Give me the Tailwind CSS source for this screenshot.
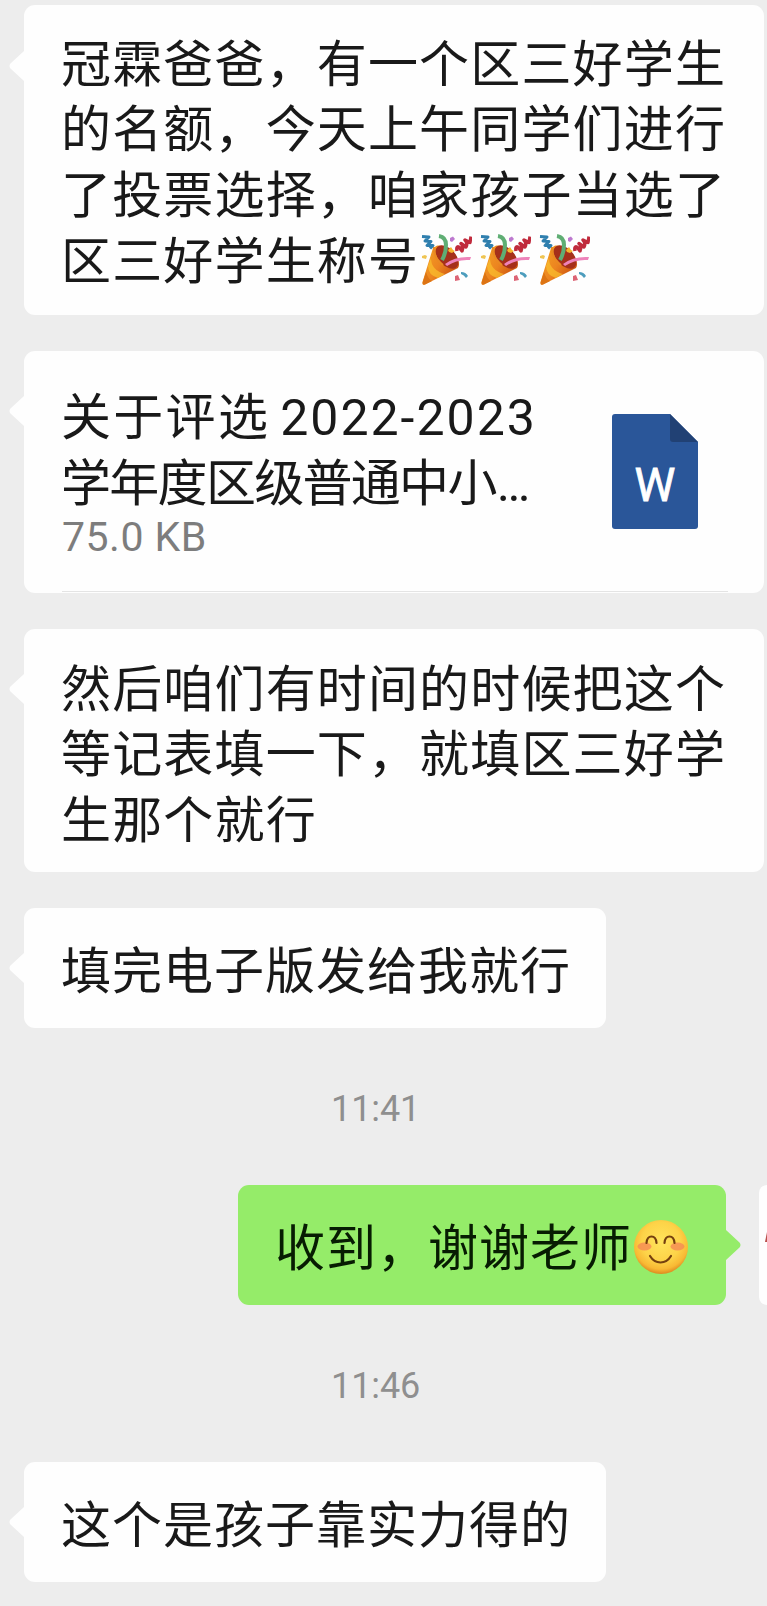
<!DOCTYPE html>
<html lang="zh-CN">
<head>
<meta charset="utf-8">
<title>聊天</title>
<script src="https://cdn.jsdelivr.net/npm/@tailwindcss/browser@4"></script>
</head>
<body class="bg-[#ededed]">
<svg width="0" height="0" class="absolute" aria-hidden="true">
  <defs>
    <linearGradient id="cone" x1="0" y1="0" x2="1" y2="0.6">
      <stop offset="0" stop-color="#f5a623"/><stop offset="0.55" stop-color="#ec8420"/><stop offset="1" stop-color="#c9500f"/>
    </linearGradient>
    <radialGradient id="face" cx="0.5" cy="0.4" r="0.6">
      <stop offset="0" stop-color="#ffe45c"/><stop offset="0.6" stop-color="#fdd348"/><stop offset="0.85" stop-color="#f8b934"/><stop offset="1" stop-color="#dd8a20"/>
    </radialGradient>
    <symbol id="popper" viewBox="0 0 51 52">
      <path d="M14 13C17 10 23 12 29 16C36 21 40 29 37 34L3 51Q1 51 1.500 48L12 14Z" fill="url(#cone)"/>
      <path d="M10 24Q10 36 24 40L17 44Q7 41 7 32Z" fill="#f9bd2e" opacity=".75"/>
      <path d="M5 38Q7 45 11 47L4 50.500Q1 51 1.800 48Z" fill="#dd7414"/>
      <ellipse cx="26" cy="23" rx="8.500" ry="14" transform="rotate(-43 26 23)" fill="#a5301a"/>
      <path d="M13 13Q12 23 22 31" fill="none" stroke="#e98a22" stroke-width="2"/>
      <path d="M18 2Q25 3 25 11Q25 19 21 26" fill="none" stroke="#5fae74" stroke-width="4"/>
      <path d="M24 30Q34 22 50 23L49 26Q36 25 26 32Z" fill="#ee83ba"/>
      <path d="M1 2.500L8 3L4 7L10 7.500L6 11.500L12 11.500L9 14.500" fill="none" stroke="#2f7fae" stroke-width="3" stroke-linejoin="round"/>
      <path d="M36 17Q35 12 38 13L41 17Q43 12 40 9.500L45 13Q47 9 44 6L49 8.500L50 2.500" fill="none" stroke="#c02a3c" stroke-width="3.400" stroke-linejoin="round"/>
      <path d="M29 4L32 2.500L34 5L31 8L29 7Z" fill="#bd79cf"/>
      <path d="M30 13L32 16L34 17L31 19L28 18L27 16Z" fill="#f5b52d"/>
      <path d="M1 22L4 21L6 22L5 25L1 24Z" fill="#efc553"/>
      <path d="M34 42L37 41L39 46L34 47Z" fill="#dc6475"/>
      <path d="M40 38Q45 38 47 42L45 44Q43 41 40 40Z" fill="#4d9dbd"/>
    </symbol>
    <symbol id="smile" viewBox="0 0 54 54">
      <circle cx="27" cy="27" r="27" fill="url(#face)"/>
      <ellipse cx="10.500" cy="26.500" rx="7" ry="4" fill="#f58a55" opacity=".8"/>
      <ellipse cx="43.500" cy="26.500" rx="7" ry="4" fill="#f58a55" opacity=".8"/>
      <path d="M12.500 23Q13 16.500 17.500 16.500T22.500 23M30.500 23Q31 16.500 35.500 16.500T40.500 23" fill="none" stroke="#75400f" stroke-width="2.200" stroke-linecap="round"/>
      <path d="M16 36Q20 42.500 26.500 42.500T37 36" fill="none" stroke="#75400f" stroke-width="2.200" stroke-linecap="round"/>
    </symbol>
    <symbol id="tail" viewBox="0 0 16 32">
      <path d="M16 0V32L15 31L1.500 18.500Q-0.500 16 1.500 13.500L15 1Z"/>
    </symbol>
  </defs>
</svg>

<main class="flex h-[1606px] w-[767px] flex-col items-start overflow-hidden pt-[5px] font-['Noto_Sans_CJK_SC',sans-serif] text-[50px] leading-[65.3px] tracking-[1.16px] whitespace-nowrap text-[#191919]">

  <section class="relative ml-6 h-[310px] w-[740px] rounded-[11px] bg-[#fefefe] pt-[23px] pl-[37px]">
    <svg class="absolute top-[45px] -left-[15px] h-8 w-4 fill-[#fefefe]"><use href="#tail"/></svg>
    <p>冠霖爸爸，有一个区三好学生</p>
    <p>的名额，今天上午同学们进行</p>
    <p>了投票选择，咱家孩子当选了</p>
    <div class="flex items-center gap-2 pt-px">
      <p class="mr-[-6px]">区三好学生称号</p>
      <svg class="mt-1 h-[52px] w-[51px]"><use href="#popper"/></svg>
      <svg class="mt-1 h-[52px] w-[51px]"><use href="#popper"/></svg>
      <svg class="mt-1 h-[52px] w-[51px]"><use href="#popper"/></svg>
    </div>
  </section>

  <section class="relative mt-9 ml-6 flex h-[242px] w-[740px] rounded-[11px] bg-[#fefefe] pl-[37px]">
    <svg class="absolute top-11 -left-[15px] h-8 w-4 fill-[#fefefe]"><use href="#tail"/></svg>
    <div class="w-[551px] shrink-0 pt-[30px]">
      <p class="flex h-[66px] items-baseline tracking-[2.3px]"><span>关于评选</span><span class="ml-[10px] font-[Roboto] tracking-[2px]">2022-2023</span></p>
      <p class="flex h-[65px] items-baseline tracking-[-1.7px]"><span>学年度区级普通中小</span><span class="ml-[1px] font-[Roboto] tracking-normal">…</span></p>
      <p class="ml-px h-[50px] font-[Roboto] text-[41px] leading-[50px] tracking-[0.5px] text-[#7d7d7d]">75.0 KB</p>
    </div>
    <svg class="mt-[63px] h-[115px] w-[86px]" viewBox="0 0 86 115">
      <path d="M3 0H58L86 28V112Q86 115 83 115H3Q0 115 0 112V3Q0 0 3 0Z" fill="#2a5699"/>
      <path d="M58 0L86 28H61Q58 28 58 25Z" fill="#214174"/>
      <text x="43" y="87" text-anchor="middle" stroke="#fff" stroke-width="0.8" class="fill-white font-[Roboto] text-[46px] font-normal tracking-normal">W</text>
    </svg>
    <div class="absolute bottom-px left-[38px] h-px w-[666px] bg-[#e4e4e4]"></div>
  </section>

  <section class="relative mt-9 ml-6 h-[243px] w-[740px] rounded-[11px] bg-[#fefefe] pt-[24px] pl-[37px]">
    <svg class="absolute top-11 -left-[15px] h-8 w-4 fill-[#fefefe]"><use href="#tail"/></svg>
    <p>然后咱们有时间的时候把这个</p>
    <p>等记表填一下，就填区三好学</p>
    <p>生那个就行</p>
  </section>

  <section class="relative mt-9 ml-6 h-[120px] w-[582px] rounded-[11px] bg-[#fefefe] pt-[27px] pl-[37px] tracking-[1px]">
    <svg class="absolute top-11 -left-[15px] h-8 w-4 fill-[#fefefe]"><use href="#tail"/></svg>
    <p>填完电子版发给我就行</p>
  </section>

  <time class="mt-[61px] ml-[331px] h-[40px] font-[Roboto] text-[36px] leading-[40px] tracking-[-0.1px] text-[#8f8f8f]">11:41</time>

  <div class="mt-[56px] ml-[238px] flex h-[120px]">
    <section class="relative flex w-[488px] rounded-[11px] bg-[#95ec69] pt-[27px] pl-[37px] tracking-[1px] text-[#071c02]">
      <svg class="absolute top-11 -right-[15px] h-8 w-4 -scale-x-100 fill-[#95ec69]"><use href="#tail"/></svg>
      <p>收到，谢谢老师</p>
      <svg class="mt-2 ml-[2px] h-[54px] w-[54px]"><use href="#smile"/></svg>
    </section>
    <div class="ml-[33px] h-[120px] w-[120px] shrink-0 rounded-[8px] bg-[#fefefe]">
      <svg class="mt-[47px] ml-[6px] h-3 w-3"><path d="M2 0L0 10H2Z" fill="#b8504c"/></svg>
    </div>
  </div>

  <time class="mt-[61px] ml-[331px] h-[40px] font-[Roboto] text-[36px] leading-[40px] tracking-[-0.1px] text-[#8f8f8f]">11:46</time>

  <section class="relative mt-[56px] ml-6 h-[120px] w-[582px] shrink-0 rounded-[11px] bg-[#fefefe] pt-[27px] pl-[37px] tracking-[1px]">
    <svg class="absolute top-11 -left-[15px] h-8 w-4 fill-[#fefefe]"><use href="#tail"/></svg>
    <p>这个是孩子靠实力得的</p>
  </section>
</main>
</body>
</html>
